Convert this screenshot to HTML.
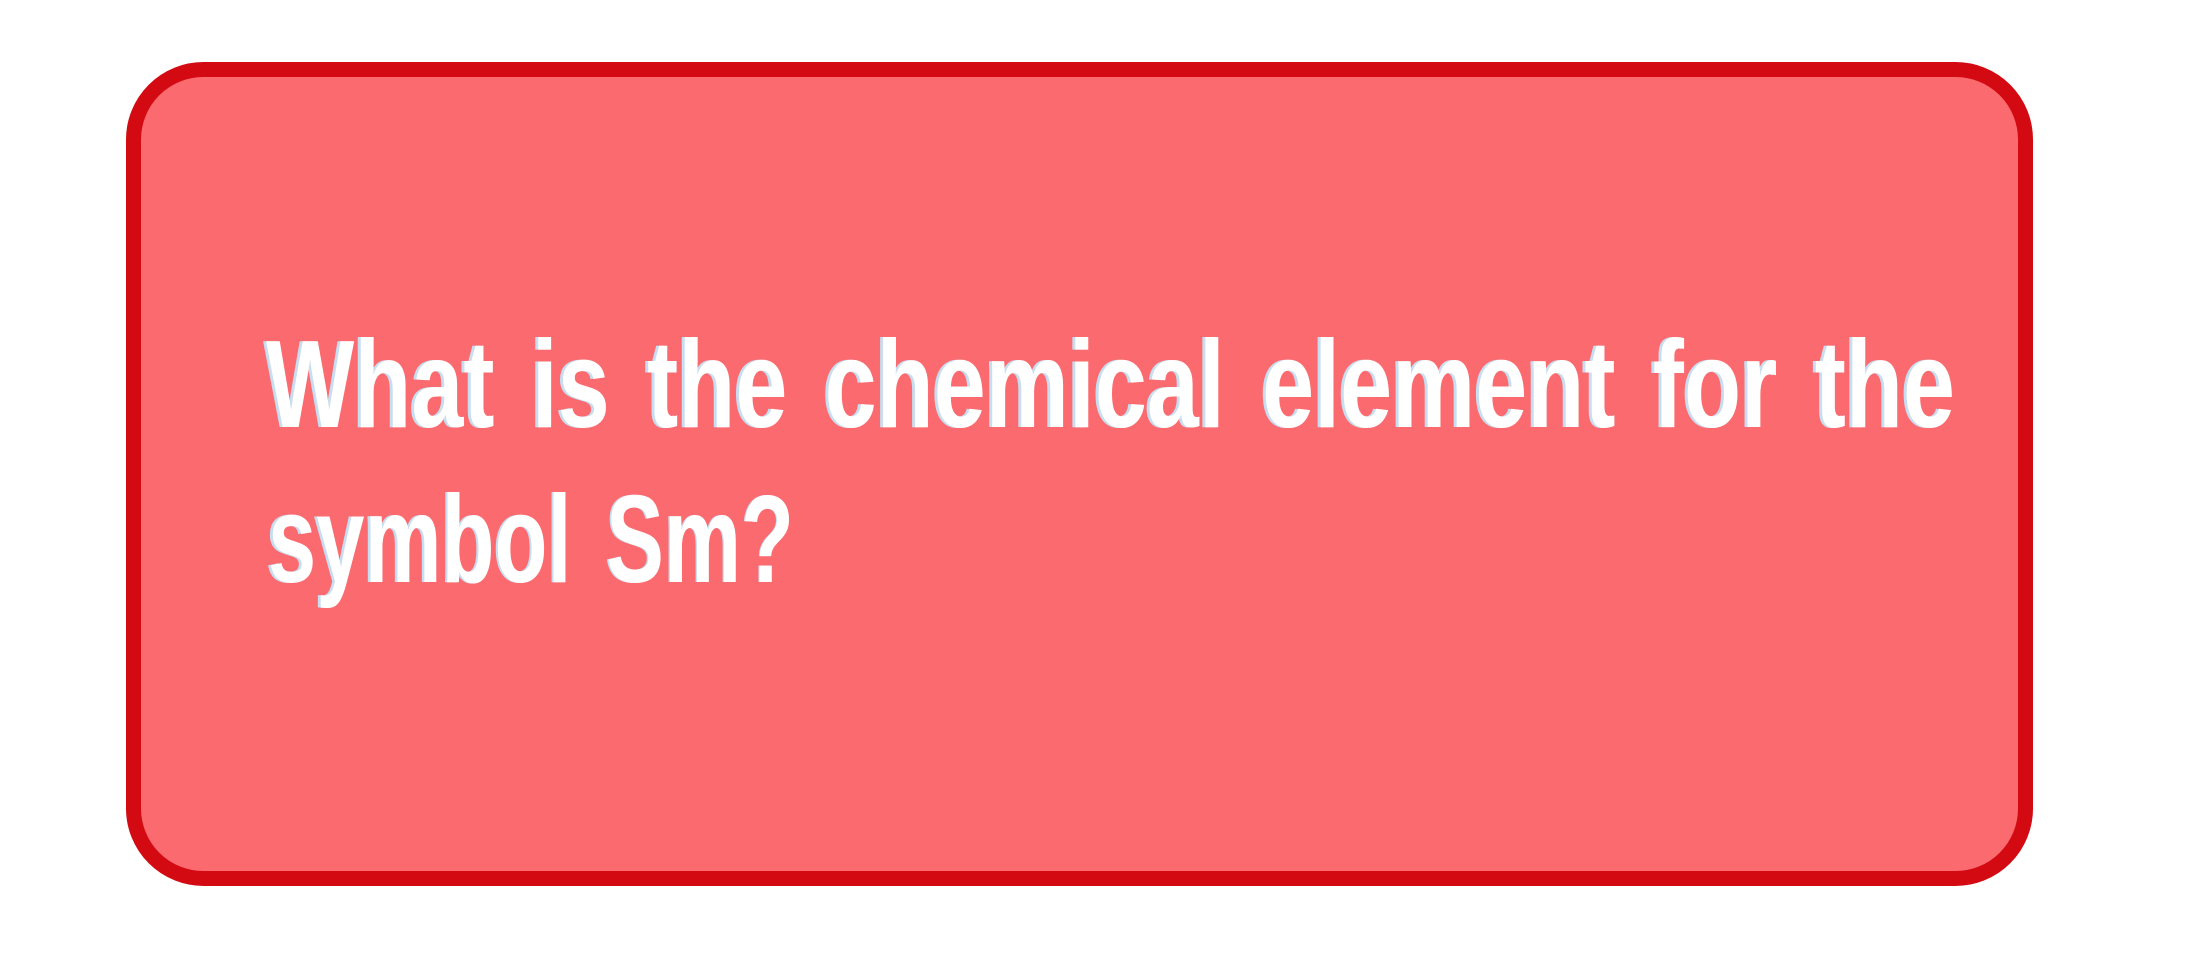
<!DOCTYPE html>
<html><head><meta charset="utf-8"><style>
html,body{margin:0;padding:0;background:#fff;width:2195px;height:964px;overflow:hidden}
svg{display:block}
</style></head><body>
<svg width="2195" height="964" xmlns="http://www.w3.org/2000/svg">
<rect x="133.5" y="69.5" width="1892" height="809" rx="70" ry="70" fill="#fb6a6f" stroke="#d40a12" stroke-width="15"/>
<g font-family="Liberation Sans, sans-serif" font-weight="bold" font-size="124" word-spacing="15">
<text x="263" y="427" fill="#c8def0" textLength="1689" lengthAdjust="spacingAndGlyphs">What is the chemical element for the</text>
<text x="266" y="427" fill="#ffffff" textLength="1689" lengthAdjust="spacingAndGlyphs">What is the chemical element for the</text>
<text x="265" y="582" fill="#c8def0" textLength="528" lengthAdjust="spacingAndGlyphs">symbol Sm?</text>
<text x="268" y="582" fill="#ffffff" textLength="526" lengthAdjust="spacingAndGlyphs">symbol Sm?</text>
</g>
</svg>
</body></html>
